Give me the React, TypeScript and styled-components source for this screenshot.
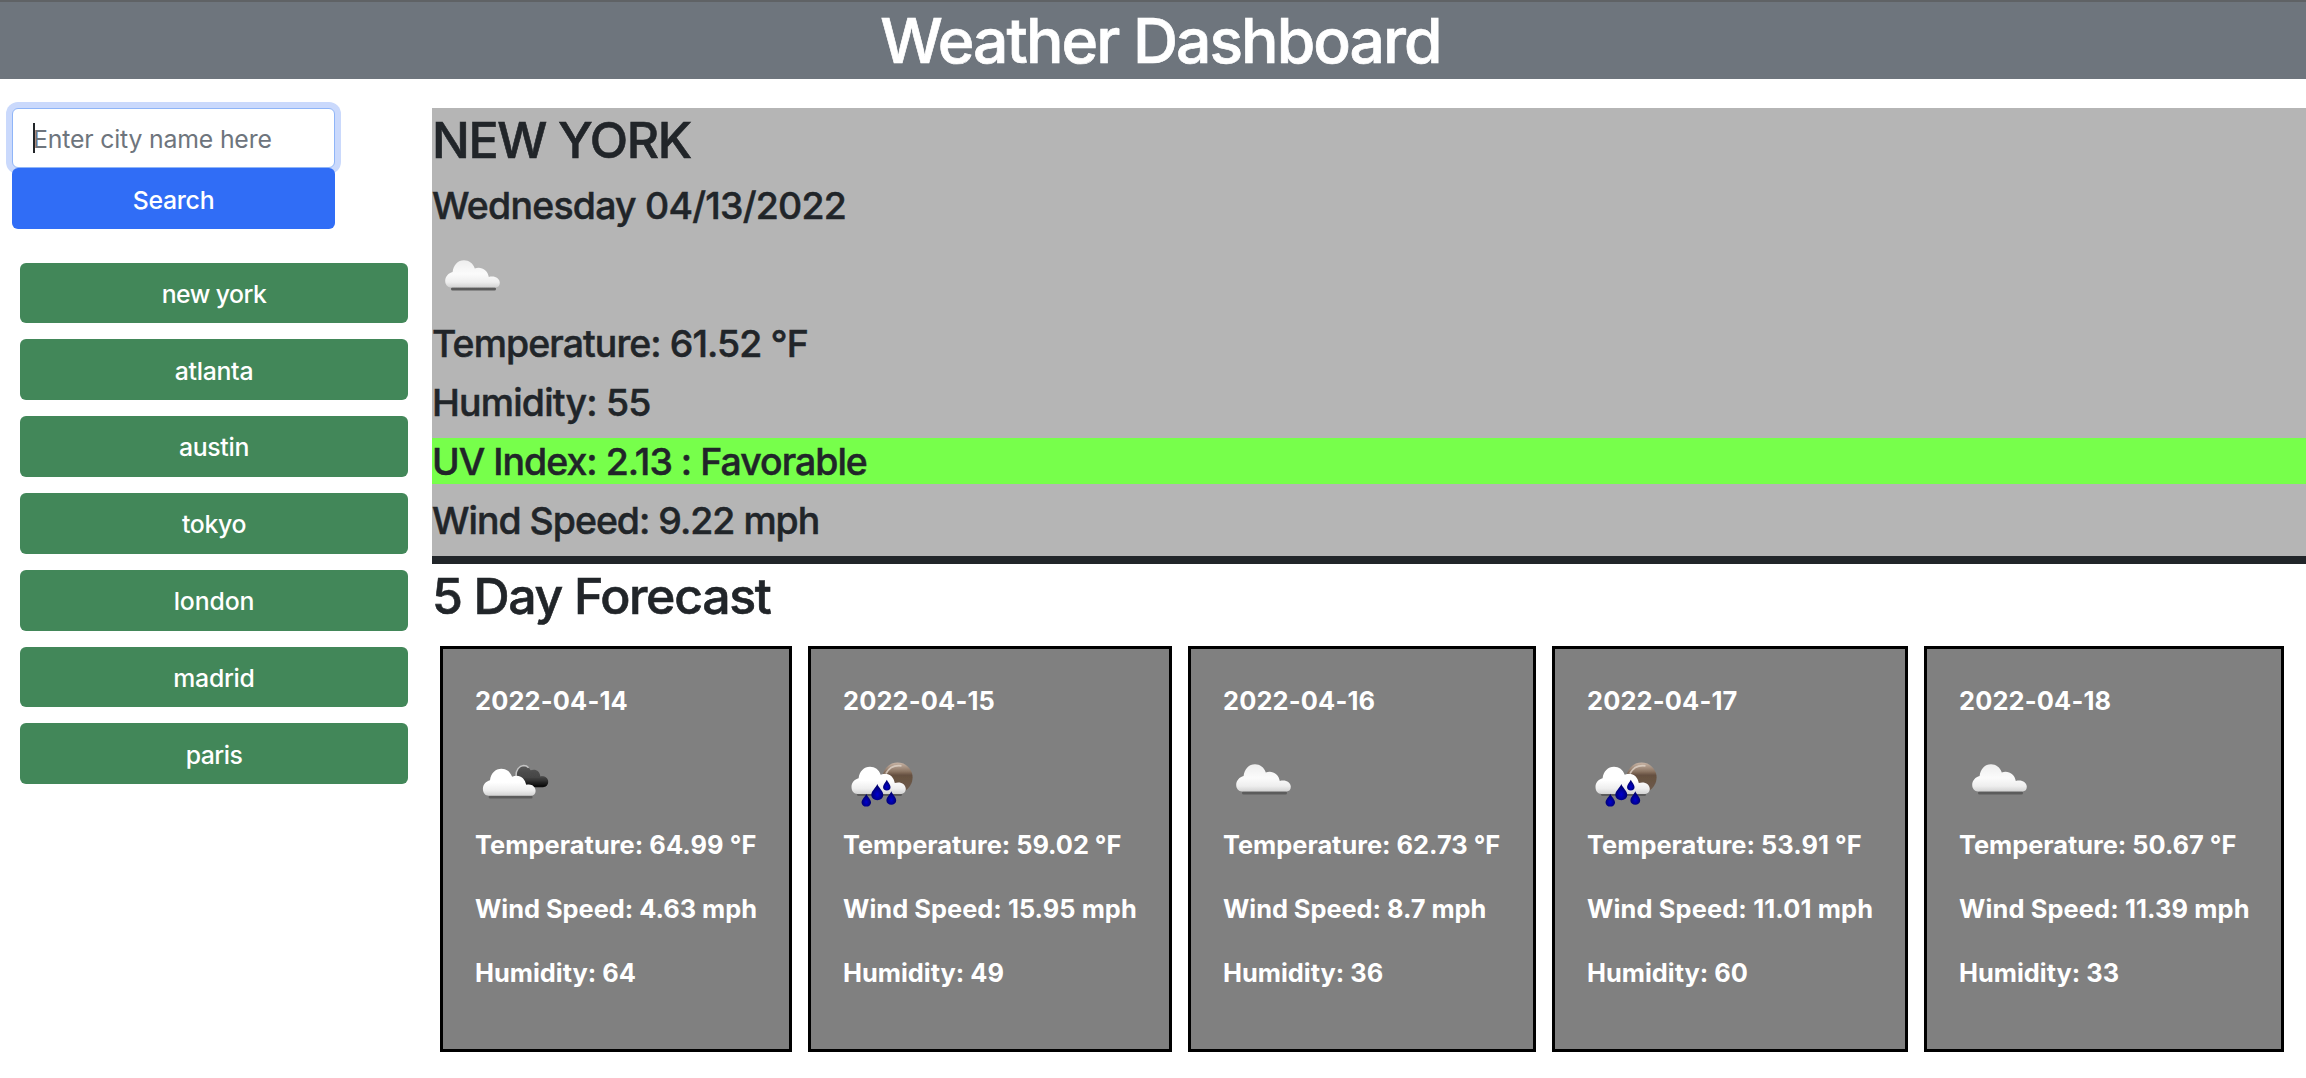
import React from "react";
import styled, { createGlobalStyle } from "styled-components";

const GlobalStyle = createGlobalStyle`
  *, *::before, *::after { box-sizing: border-box; }
  body {
    margin: 0;
    background: #fff;
    color: #212529;
    font-family: Inter, "Liberation Sans", sans-serif;
    font-size: 24.8px;
    line-height: 38.4px;
    overflow: hidden;
  }
`;

const Header = styled.header`
  height: 79px;
  padding-left: 15px;
  border-top: 2px solid #5f6265;
  background: #6e757d;
  color: #fff;
  text-align: center;
`;

const Title = styled.h1`
  margin: 0;
  font-size: 62.4px;
  line-height: 77px;
  font-weight: 500;
  letter-spacing: -1.97px;
  -webkit-text-stroke: 0.7px currentColor;
`;

const Page = styled.div`
  display: flex;
  align-items: flex-start;
  padding-top: 29px;
`;

const Sidebar = styled.aside`
  flex: none;
  width: 432px;
`;

const SearchForm = styled.div`
  display: flex;
  flex-direction: column;
  width: 323px;
  margin-left: 12px;
`;

const FieldWrap = styled.div`
  position: relative;
  display: flex;
`;

const CityInput = styled.input`
  width: 100%;
  height: 60px;
  padding: 2px 20px 0;
  border: 1px solid #8fb5f8;
  border-radius: 6px;
  outline: none;
  box-shadow: 0 0 0 6px #cad9fc;
  background: #fff;
  color: #212529;
  font: inherit;
  letter-spacing: -0.17px;
  &::placeholder { color: #6e757d; opacity: 1; }
`;

const Caret = styled.span`
  position: absolute;
  left: 21px;
  top: 15px;
  width: 2px;
  height: 30px;
  background: #212529;
`;

const Button = styled.button<{ $bg: string; $tracking: number }>`
  position: relative;
  height: 60.8px;
  padding: 2px 0 0;
  border: 0;
  border-radius: 6px;
  background: ${(p) => p.$bg};
  color: #fff;
  font: inherit;
  font-weight: 450;
  letter-spacing: ${(p) => p.$tracking}px;
`;

const SearchButton = styled(Button)`
  padding-top: 3px;
`;

const CityList = styled.nav`
  display: flex;
  flex-direction: column;
  gap: 16px;
  width: 388px;
  margin: 33.8px 0 0 20px;
`;

const Main = styled.main`
  flex: 1;
  min-width: 0;
`;

const Current = styled.section`
  height: 456px;
  border-bottom: 8px solid #212529;
  background: #b5b5b5;
`;

const Heading = styled.h2`
  margin: 0 0 12.8px;
  padding-top: 3px;
  font-size: 50px;
  line-height: 58.4px;
  font-weight: 500;
  letter-spacing: -1.35px;
  -webkit-text-stroke: 0.6px currentColor;
`;

const Detail = styled.h4<{ $tracking: number; $bg?: string }>`
  margin: 0 0 12.8px;
  padding-top: 2px;
  font-size: 37.4px;
  line-height: 44.1px;
  font-weight: 500;
  letter-spacing: ${(p) => p.$tracking}px;
  background: ${(p) => p.$bg ?? "transparent"};
  -webkit-text-stroke: 0.5px currentColor;
`;

const CurrentIcon = styled.div`
  height: 78.8px;
`;

const Cards = styled.div`
  display: flex;
  gap: 16px;
  padding: 8px 0 0 8px;
`;

const Card = styled.article<{ $width: number }>`
  flex: none;
  width: ${(p) => p.$width}px;
  height: 406px;
  padding: 32px;
  border: 3px solid #000;
  background: gray;
  color: #fff;
  font-size: 25.4px;
  font-weight: 700;
`;

const Line = styled.p<{ $tracking: number }>`
  margin: 0 0 25.6px;
  padding-top: 2px;
  line-height: 36.4px;
  letter-spacing: ${(p) => p.$tracking}px;
  white-space: nowrap;
`;

const IconSvg = styled.svg`
  display: block;
  width: 80px;
  height: 80px;
`;

type IconKind = "cloud" | "broken" | "rain";

const DROP = "M0 -8C1.2 -4.2 5 -1.2 5 2.8A5 5 0 0 1 -5 2.8C-5 -1.2 -1.2 -4.2 0 -8Z";

function WeatherIcon({ kind, id }: { kind: IconKind; id: string }) {
  return (
    <IconSvg viewBox="0 0 80 80" aria-hidden="true">
      <defs>
        <linearGradient id={`${id}-w`} x1="0" y1="0" x2="0" y2="1">
          <stop offset="0" stopColor={kind === "cloud" ? "#eeeeee" : "#ffffff"} />
          <stop offset="0.5" stopColor={kind === "cloud" ? "#fbfbfb" : "#ffffff"} />
          <stop offset="0.8" stopColor="#eeeeee" />
          <stop offset="1" stopColor="#d2d2d2" />
        </linearGradient>
        <linearGradient id={`${id}-d`} x1="0" y1="0" x2="0" y2="1">
          <stop offset="0" stopColor="#565656" />
          <stop offset="0.55" stopColor="#444444" />
          <stop offset="1" stopColor="#050505" />
        </linearGradient>
        <linearGradient id={`${id}-m`} x1="0" y1="0" x2="0" y2="1">
          <stop offset="0" stopColor="#c7b3a4" />
          <stop offset="0.3" stopColor="#8a7362" />
          <stop offset="0.42" stopColor="#65503f" />
          <stop offset="1" stopColor="#705c4c" />
        </linearGradient>
        <radialGradient id={`${id}-r`} cx="0.5" cy="0.65" r="0.5">
          <stop offset="0" stopColor="#0000d0" />
          <stop offset="1" stopColor="#000070" />
        </radialGradient>
        <filter id={`${id}-b`} x="-20%" y="-100%" width="140%" height="300%">
          <feGaussianBlur stdDeviation="0.6" />
        </filter>
        <filter id={`${id}-s`} x="-10%" y="-10%" width="120%" height="120%">
          <feGaussianBlur stdDeviation="0.45" />
        </filter>
      </defs>
      {kind === "cloud" && (
        <>
          <rect x="19" y="46.2" width="45" height="3.4" rx="1.5" fill="#5c5c5c" filter={`url(#${id}-b)`} />
          <path
            d="M19 46.5C15.5 46.5 13.2 43.6 13.2 39.8C13.2 35.5 16.5 32 20.6 31C21.4 24 26 19.3 32 19.3C37 19.3 41 22.4 42.8 27.4C49.5 25.3 55.6 29 56.8 36C62.5 34.3 67.8 37.3 67.8 41.8C67.8 44.6 66.2 46.5 63.8 46.5Z"
            fill={`url(#${id}-w)`}
            filter={`url(#${id}-s)`}
          />
        </>
      )}
      {kind === "broken" && (
        <>
          <g filter={`url(#${id}-s)`}>
            <path
              d="M42 32C40.5 26 43.5 21 49 20.8C52 20.8 54.3 22.8 55.5 25.3C60.5 23.3 65 26.2 65.3 31.4C69.8 30.8 73.2 32.8 73.2 36.8C73.2 40 71 42.2 68 42.2H55Z"
              fill={`url(#${id}-d)`}
            />
            <path d="M41 31C40.8 25 44.2 20.8 48.6 20.6C50.6 20.6 52.4 21.4 53.6 22.8" fill="none" stroke="#c4c4c4" strokeWidth="1.5" />
          </g>
          <rect x="13.6" y="50.5" width="44" height="3" rx="1.5" fill="#5c5c5c" filter={`url(#${id}-b)`} />
          <path
            d="M13.9 50.8C10.2 50.8 7.9 48 7.9 43.8C7.9 39.4 11 36.2 15 35.2C15.8 28.4 20.4 23.8 26.4 23.8C31.4 23.8 35.3 26.7 37.1 31.8C43.8 28.4 50 32.8 51.2 40C56.5 38.4 60.6 41.7 60.6 46C60.6 49 58.6 50.8 56 50.8Z"
            fill={`url(#${id}-w)`}
            filter={`url(#${id}-s)`}
          />
        </>
      )}
      {kind === "rain" && (
        <>
          <g filter={`url(#${id}-s)`}>
            <circle cx="54.6" cy="32.6" r="15" fill={`url(#${id}-m)`} />
            <path d="M43 28.5C46 22.8 51 19.8 58.5 20.8" fill="none" stroke="#e0d3c8" strokeWidth="1.8" opacity="0.8" />
          </g>
          <rect x="14" y="48" width="45" height="3" rx="1.5" fill="#5c5c5c" filter={`url(#${id}-b)`} />
          <path
            d="M14.5 49C10.8 49 8.5 46 8.5 41.8C8.5 37.4 11.6 34.2 15.6 33.2C16.4 26.4 21 21.8 27 21.8C32 21.8 35.9 24.7 37.7 29.8C44.4 26.4 50.6 30.8 51.8 38C57.6 36.2 62.8 39.2 62.8 44C62.8 47 60.4 49 57 49Z"
            fill={`url(#${id}-w)`}
            filter={`url(#${id}-s)`}
          />
          <g fill={`url(#${id}-r)`}>
            <path d={DROP} transform="translate(23.3 55.2) scale(.95 .82)" />
            <path d={DROP} transform="translate(34.3 47.2) scale(1.2 1.02)" />
            <path d={DROP} transform="translate(43.8 40.2) scale(.75 .68)" />
            <path d={DROP} transform="translate(48.3 53) scale(.98 .85)" />
          </g>
        </>
      )}
    </IconSvg>
  );
}

const cities: [string, number][] = [
  ["new york", -0.53],
  ["atlanta", -0.3],
  ["austin", -0.3],
  ["tokyo", -0.33],
  ["london", -0.15],
  ["madrid", -0.27],
  ["paris", -0.5],
];

interface Day {
  date: string;
  icon: IconKind;
  width: number;
  temp: string;
  wind: string;
  humidity: number;
  tracking: [number, number];
}

const days: Day[] = [
  { date: "2022-04-14", icon: "broken", width: 352, temp: "64.99", wind: "4.63", humidity: 64, tracking: [0.06, -0.02] },
  { date: "2022-04-15", icon: "rain", width: 364, temp: "59.02", wind: "15.95", humidity: 49, tracking: [-0.03, 0.04] },
  { date: "2022-04-16", icon: "cloud", width: 348, temp: "62.73", wind: "8.7", humidity: 36, tracking: [0, -0.04] },
  { date: "2022-04-17", icon: "rain", width: 356, temp: "53.91", wind: "11.01", humidity: 60, tracking: [0.04, 0.14] },
  { date: "2022-04-18", icon: "cloud", width: 360, temp: "50.67", wind: "11.39", humidity: 33, tracking: [-0.02, 0.12] },
];

export default function App() {
  return (
    <>
      <GlobalStyle />
      <Header>
        <Title>Weather Dashboard</Title>
      </Header>
      <Page>
        <Sidebar>
          <SearchForm>
            <FieldWrap>
              <CityInput placeholder="Enter city name here" />
              <Caret />
            </FieldWrap>
            <SearchButton $bg="#306df6" $tracking={-0.28}>Search</SearchButton>
          </SearchForm>
          <CityList>
            {cities.map(([name, tracking]) => (
              <Button key={name} $bg="#428759" $tracking={tracking}>{name}</Button>
            ))}
          </CityList>
        </Sidebar>
        <Main>
          <Current>
            <Heading>NEW YORK</Heading>
            <Detail $tracking={-0.75}>Wednesday 04/13/2022</Detail>
            <CurrentIcon>
              <WeatherIcon kind="cloud" id="now" />
            </CurrentIcon>
            <Detail $tracking={-0.9}>Temperature: 61.52 °F</Detail>
            <Detail $tracking={-0.78}>Humidity: 55</Detail>
            <Detail $tracking={-0.96} $bg="#77ff4b">UV Index: 2.13 : Favorable</Detail>
            <Detail $tracking={-0.98}>Wind Speed: 9.22 mph</Detail>
          </Current>
          <Heading>5 Day Forecast</Heading>
          <Cards>
            {days.map((d) => (
              <Card key={d.date} $width={d.width}>
                <Line $tracking={0.17}>{d.date}</Line>
                <WeatherIcon kind={d.icon} id={`d${d.date}`} />
                <Line $tracking={d.tracking[0]}>Temperature: {d.temp} °F</Line>
                <Line $tracking={d.tracking[1]}>Wind Speed: {d.wind} mph</Line>
                <Line $tracking={0}>Humidity: {d.humidity}</Line>
              </Card>
            ))}
          </Cards>
        </Main>
      </Page>
    </>
  );
}
